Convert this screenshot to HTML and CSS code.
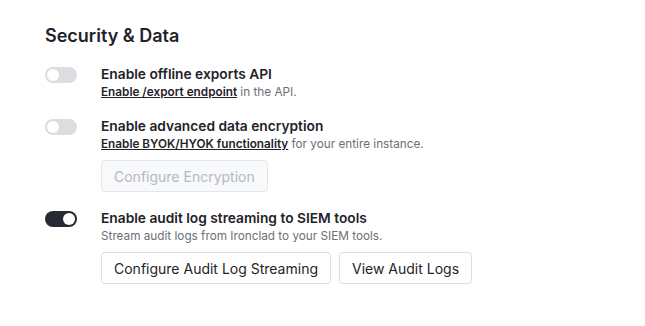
FILE: index.html
```html
<!DOCTYPE html>
<html lang="en">
<head>
    <meta charset="UTF-8">
    <title>Security &amp; Data</title>
    <link rel="stylesheet" href="styles.css">
</head>
<body>
    <section class="settings">
        <h2>Security &amp; Data</h2>

        <div class="setting">
            <span class="toggle"></span>
            <div class="setting-body">
                <div class="label">Enable offline exports API</div>
                <div class="desc"><a href="#">Enable /export endpoint</a> in the API.</div>
            </div>
        </div>

        <div class="setting">
            <span class="toggle"></span>
            <div class="setting-body">
                <div class="label">Enable advanced data encryption</div>
                <div class="desc"><a href="#">Enable BYOK/HYOK functionality</a> for your entire instance.</div>
                <div class="actions">
                    <button class="btn" disabled>Configure Encryption</button>
                </div>
            </div>
        </div>

        <div class="setting">
            <span class="toggle on"></span>
            <div class="setting-body">
                <div class="label">Enable audit log streaming to SIEM tools</div>
                <div class="desc">Stream audit logs from Ironclad to your SIEM tools.</div>
                <div class="actions">
                    <button class="btn">Configure Audit Log Streaming</button>
                    <button class="btn">View Audit Logs</button>
                </div>
            </div>
        </div>
    </section>
</body>
</html>
```

FILE: styles.css
```css
body {
    font-family: 'Inter', 'Noto Sans', sans-serif;
    margin: 0;
    padding: 0;
    background-color: #ffffff;
    color: #1f2329;
}

.settings {
    padding: 25px 45px;
}

h2 {
    font-size: 18px;
    font-weight: 600;
    margin: 0 0 18px;
    line-height: 22px;
}

.setting {
    display: flex;
    gap: 24px;
    margin-bottom: 17px;
}

/* toggle switch */
.toggle {
    position: relative;
    flex: none;
    width: 32px;
    height: 16px;
    margin-top: 2px;
    border-radius: 8px;
    background-color: #dcdde1;
}

.toggle::after {
    content: "";
    position: absolute;
    top: 2px;
    left: 2px;
    width: 12px;
    height: 12px;
    border-radius: 50%;
    background-color: #ffffff;
}

.toggle.on {
    background-color: #262b33;
}

.toggle.on::after {
    left: 18px;
}

.label {
    font-size: 13.75px;
    font-weight: 600;
    line-height: 19px;
}

.desc {
    font-size: 11.75px;
    line-height: 16px;
    color: #6b6f76;
}

.desc a {
    color: #1f2329;
    font-weight: 600;
    text-decoration: underline;
}

.actions {
    display: flex;
    gap: 8px;
    margin-top: 8px;
}

.btn {
    font-family: inherit;
    font-size: 14px;
    height: 32px;
    padding: 0 12px;
    border: 1px solid #dcdde1;
    border-radius: 4px;
    background-color: #ffffff;
    color: #1f2329;
}

.btn:disabled {
    color: #b5b8bd;
    background-color: #f8f9fa;
    border-color: #e4e5e8;
}
```
